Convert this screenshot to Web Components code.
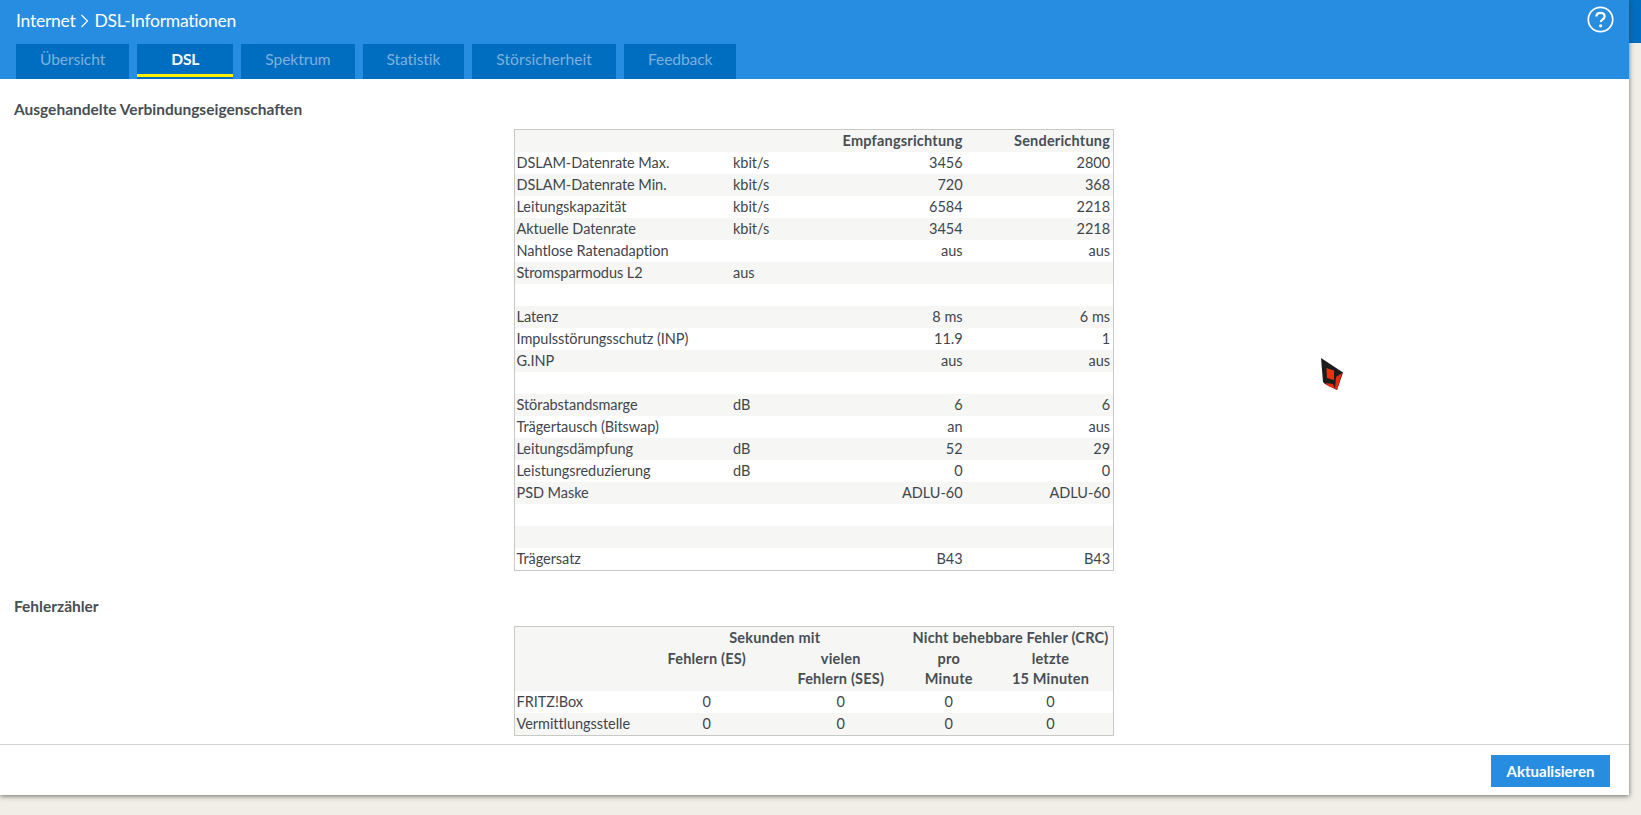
<!DOCTYPE html>
<html lang="de">
<head>
<meta charset="utf-8">
<title>DSL-Informationen</title>
<style>
  html, body { margin: 0; height: 100%; overflow: hidden; }
  body { font-family: Lato, "Liberation Sans", sans-serif; color: #3f464c; }
</style>
</head>
<body>
<fritz-shell>
  <fritz-header slot="header" current="DSL">
    <fritz-tab>Übersicht</fritz-tab>
    <fritz-tab active>DSL</fritz-tab>
    <fritz-tab>Spektrum</fritz-tab>
    <fritz-tab>Statistik</fritz-tab>
    <fritz-tab wide>Störsicherheit</fritz-tab>
    <fritz-tab>Feedback</fritz-tab>
  </fritz-header>
  <section-title>Ausgehandelte Verbindungseigenschaften</section-title>
  <props-table></props-table>
  <section-title class="second">Fehlerzähler</section-title>
  <error-table></error-table>
  <fritz-button slot="footer">Aktualisieren</fritz-button>
</fritz-shell>
<fritz-cursor></fritz-cursor>

<script>
class FritzShell extends HTMLElement {
  constructor() {
    super();
    this.attachShadow({ mode: 'open' }).innerHTML = `
      <style>
        :host {
          display: block;
          height: 815px;
          background: linear-gradient(#006ec0 0 43px, #f0eee7 43px);
        }
        .panel {
          width: 1629px;
          height: 795px;
          display: flex;
          flex-direction: column;
          background: #fff;
          box-shadow: 0 1px 5px rgba(60, 60, 55, .75);
        }
        main { flex: 1; min-height: 0; overflow: hidden; padding: 0 0 0 14px; }
        footer {
          height: 51px;
          border-top: 1px solid #d2d2d0;
          display: flex;
          justify-content: flex-end;
          padding: 10px 19px 0 0;
          box-sizing: border-box;
        }
      </style>
      <div class="panel">
        <slot name="header"></slot>
        <main><slot></slot></main>
        <footer><slot name="footer"></slot></footer>
      </div>`;
  }
}

class FritzHeader extends HTMLElement {
  constructor() {
    super();
    this.attachShadow({ mode: 'open' }).innerHTML = `
      <style>
        :host { display: block; height: 79px; background: #278de1; color: #fff; }
        .top {
          height: 44px;
          display: flex;
          justify-content: space-between;
          padding: 0 15px 0 16px;
          box-sizing: border-box;
        }
        h1 {
          margin: 0;
          height: 41px;
          display: flex;
          align-items: center;
          gap: 5px;
          font-size: 17.5px;
          font-weight: 400;
          letter-spacing: -.25px;
        }
        .help { margin-top: 6px; }
        nav { display: flex; gap: 8px; padding-left: 16px; }
      </style>
      <div class="top">
        <h1>Internet
          <svg width="9" height="14" viewBox="0 0 9 14" fill="none" stroke="#fff" stroke-width="1.1"><path d="M1.5 1l6 6-6 6"/></svg>
          DSL-Informationen</h1>
        <svg class="help" width="27" height="27" viewBox="0 0 27 27" fill="none">
          <circle cx="13.5" cy="13.5" r="12.2" stroke="#fff" stroke-width="1.7"/>
          <path d="M9.4 10.6c0-2.4 1.8-3.8 4.1-3.8s4.1 1.3 4.1 3.5c0 1.7-1 2.5-2.2 3.3-1 .7-1.5 1.2-1.5 2.4" stroke="#fff" stroke-width="2.2"/>
          <circle cx="13.7" cy="19.8" r="1.6" fill="#fff"/>
        </svg>
      </div>
      <nav><slot></slot></nav>`;
  }
}

class FritzTab extends HTMLElement {
  constructor() {
    super();
    this.attachShadow({ mode: 'open' }).innerHTML = `
      <style>
        :host {
          display: block;
          height: 35px;
          padding: 0 24px;
          box-sizing: border-box;
          background: #006ec0;
          color: #7db0dd;
          font-size: 15.6px;
          line-height: 31px;
          letter-spacing: -.1px;
        }
        :host([wide]) { letter-spacing: .05px; }
        :host([active]) {
          color: #fff;
          font-weight: 700;
          padding: 0 34px;
          box-shadow: inset 0 -2px 0 #006ec0, inset 0 -5px 0 #ffee00;
        }
      </style>
      <slot></slot>`;
  }
}

class SectionTitle extends HTMLElement {
  constructor() {
    super();
    this.attachShadow({ mode: 'open' }).innerHTML = `
      <style>
        :host {
          display: block;
          height: 50px;
          line-height: 60px;
          font-size: 15.5px;
          font-weight: 700;
          color: #474e54;
        }
        :host(.second) { height: 31px; line-height: 22px; margin-top: 24px; }
      </style>
      <slot></slot>`;
  }
}

const TABLE_CSS = `
  :host { display: block; width: 600px; margin-left: 500px; }
  table {
    width: 100%;
    table-layout: fixed;
    border-collapse: collapse;
    border: 1px solid #c8c8c4;
    font-size: 14.5px;
    letter-spacing: -.05px;
    color: #3f464c;
  }
  td, th { padding: 0 3px 0 1.5px; height: 22px; line-height: 20px; font-weight: 400; white-space: nowrap; }
  tr.alt { background: #f6f6f4; }
  th { font-weight: 700; letter-spacing: .2px; color: #474e54; }
`;

const PROPS_ROWS = [
  ['DSLAM-Datenrate Max.', 'kbit/s', '3456', '2800'],
  ['DSLAM-Datenrate Min.', 'kbit/s', '720', '368'],
  ['Leitungskapazität', 'kbit/s', '6584', '2218'],
  ['Aktuelle Datenrate', 'kbit/s', '3454', '2218'],
  ['Nahtlose Ratenadaption', '', 'aus', 'aus'],
  ['Stromsparmodus L2', 'aus', '', ''],
  ['', '', '', ''],
  ['Latenz', '', '8 ms', '6 ms'],
  ['Impulsstörungsschutz (INP)', '', '11.9', '1'],
  ['G.INP', '', 'aus', 'aus'],
  ['', '', '', ''],
  ['Störabstandsmarge', 'dB', '6', '6'],
  ['Trägertausch (Bitswap)', '', 'an', 'aus'],
  ['Leitungsdämpfung', 'dB', '52', '29'],
  ['Leistungsreduzierung', 'dB', '0', '0'],
  ['PSD Maske', '', 'ADLU-60', 'ADLU-60'],
  ['', '', '', ''],
  ['', '', '', ''],
  ['Trägersatz', '', 'B43', 'B43'],
];

class PropsTable extends HTMLElement {
  constructor() {
    super();
    const rows = PROPS_ROWS.map((r, i) => `
      <tr class="${i % 2 ? 'alt' : ''}">
        <td>${r[0]}</td><td>${r[1]}</td><td class="num">${r[2]}</td><td class="num">${r[3]}</td>
      </tr>`).join('');
    this.attachShadow({ mode: 'open' }).innerHTML = `
      <style>
        ${TABLE_CSS}
        .num, th { text-align: right; }
      </style>
      <table>
        <colgroup><col style="width:217px"><col style="width:90px"><col style="width:144px"><col></colgroup>
        <tr class="alt"><th></th><th></th><th>Empfangsrichtung</th><th>Senderichtung</th></tr>
        ${rows}
      </table>`;
  }
}

class ErrorTable extends HTMLElement {
  constructor() {
    super();
    this.attachShadow({ mode: 'open' }).innerHTML = `
      <style>
        ${TABLE_CSS}
        th, .c { text-align: center; }
        .two { height: 42px; vertical-align: top; }
        .two span { display: block; }
      </style>
      <table>
        <colgroup><col style="width:127px"><col style="width:132px"><col style="width:136px"><col style="width:80px"><col></colgroup>
        <tr class="alt"><th></th><th colspan="2">Sekunden mit</th><th colspan="2">Nicht behebbare Fehler (CRC)</th></tr>
        <tr class="alt">
          <th></th>
          <th class="two">Fehlern (ES)</th>
          <th class="two"><span>vielen</span><span>Fehlern (SES)</span></th>
          <th class="two"><span>pro</span><span>Minute</span></th>
          <th class="two"><span>letzte</span><span>15 Minuten</span></th>
        </tr>
        <tr><td>FRITZ!Box</td><td class="c">0</td><td class="c">0</td><td class="c">0</td><td class="c">0</td></tr>
        <tr class="alt"><td>Vermittlungsstelle</td><td class="c">0</td><td class="c">0</td><td class="c">0</td><td class="c">0</td></tr>
      </table>`;
  }
}

class FritzButton extends HTMLElement {
  constructor() {
    super();
    this.attachShadow({ mode: 'open' }).innerHTML = `
      <style>
        :host {
          display: block;
          width: 119px;
          height: 32px;
          background: #278de1;
          color: #fff;
          font-size: 15px;
          font-weight: 700;
          line-height: 32px;
          text-align: center;
        }
      </style>
      <slot></slot>`;
  }
}

// mouse pointer left in the shot, lies over the page
class FritzCursor extends HTMLElement {
  constructor() {
    super();
    this.attachShadow({ mode: 'open' }).innerHTML = `
      <style>
        :host { position: absolute; left: 1320px; top: 357px; width: 24px; height: 34px; }
      </style>
      <svg width="24" height="34" viewBox="0 0 24 34">
        <path d="M1 1L23 15.5 17 33 14 31.5 5 27 3 25z" fill="#1c1c1c"/>
        <path d="M6.5 11L14 13.5 14 23 7 21z" fill="#f03010"/>
        <path d="M16 20L22 16 17 33 15 32z" fill="#e82a10"/>
        <path d="M5.5 26L13 27 15 31.5 8 29z" fill="#e82a10"/>
      </svg>`;
  }
}

customElements.define('fritz-shell', FritzShell);
customElements.define('fritz-header', FritzHeader);
customElements.define('fritz-tab', FritzTab);
customElements.define('section-title', SectionTitle);
customElements.define('props-table', PropsTable);
customElements.define('error-table', ErrorTable);
customElements.define('fritz-button', FritzButton);
customElements.define('fritz-cursor', FritzCursor);
</script>
</body>
</html>
